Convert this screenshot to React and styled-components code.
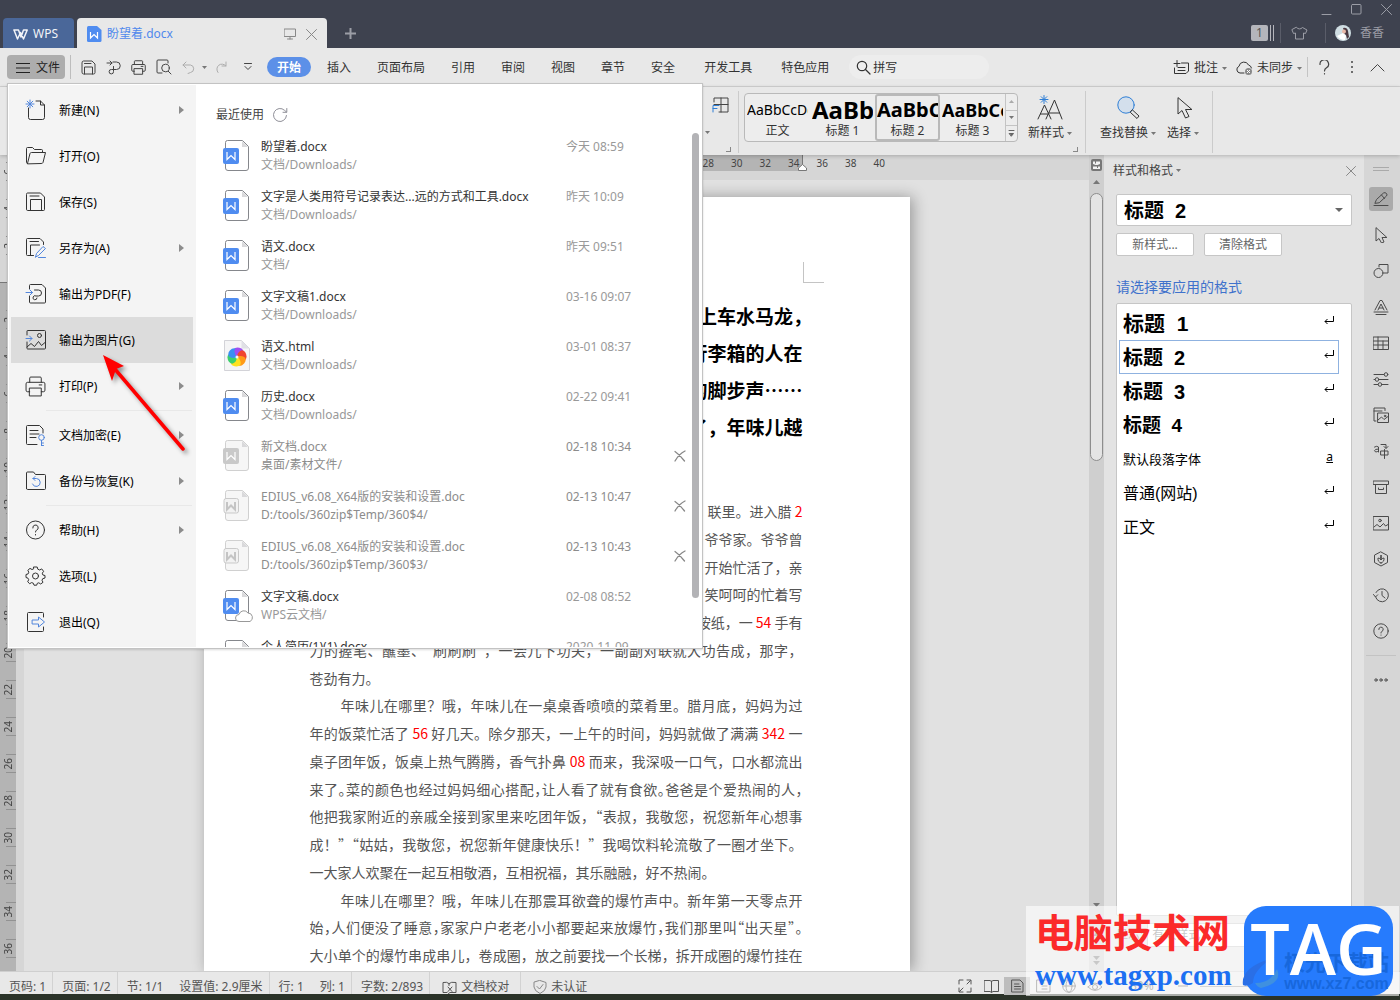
import React from "react";
import styled, { createGlobalStyle, css } from "styled-components";

const UI = `"Noto Sans", "Noto Sans CJK SC", sans-serif`;
const DOC = `"Noto Sans CJK SC", "Noto Sans", sans-serif`;

const Global = createGlobalStyle`
  *, *::before, *::after { box-sizing: border-box; }
  html, body { margin: 0; }
  body { font: 12px/18px ${UI}; color: #333; background: #2b3329; }
  button, input, select { font: inherit; color: inherit; margin: 0; }
  button { border: 0; background: none; padding: 0; }
  svg { display: block; flex: none; }
`;

/* ---------- shell ---------- */

const Desktop = styled.div`
  position: relative;
  height: 100vh;
  padding-bottom: 6px;
  background: #2b3329;
  overflow: hidden;
`;

const Window = styled.div`
  height: 100%;
  display: flex;
  flex-direction: column;
  background: #e8e8e8;
`;

const TitleBar = styled.header`
  display: flex;
  justify-content: space-between;
  height: 48px;
  flex: none;
  background: #3e424f;
  color: #9b9da6;
`;

const TabStrip = styled.div`
  display: flex;
  align-items: flex-end;
  padding-left: 3px;
`;

const HomeTab = styled.button`
  display: flex;
  align-items: center;
  gap: 5px;
  width: 71px;
  height: 30px;
  padding: 2px 0 0 10px;
  margin-right: 3px;
  border-radius: 4px 4px 0 0;
  background: #4a6799;
  color: #f2f4f8;
`;

const DocTab = styled.div`
  display: flex;
  align-items: center;
  width: 250px;
  height: 30px;
  padding: 2px 10px 0;
  border-radius: 4px 4px 0 0;
  background: #e8e8e8;
  color: #5089ec;
`;

const TabName = styled.span`
  flex: 1;
  padding-left: 5px;
`;

const TabTools = styled.span`
  display: flex;
  align-items: center;
  gap: 10px;
  color: #888;
`;

const NewTab = styled.button`
  display: grid;
  place-items: center;
  width: 46px;
  height: 30px;
`;

const TitleRight = styled.div`
  display: flex;
  flex-direction: column;
  align-items: flex-end;
`;

const WindowButtons = styled.div`
  display: flex;
  gap: 19px;
  height: 18px;
  align-items: center;
  padding-right: 8px;
`;

const Account = styled.div`
  display: flex;
  align-items: center;
  height: 30px;
  padding-right: 16px;
  span:last-child { padding-left: 9px; }
`;

const Rule = styled.span`
  width: 1px;
  height: ${(p) => p.$h || 20}px;
  margin: 0 ${(p) => p.$gap || 0}px;
  background: ${(p) => p.$c || "#c4c4c4"};
  flex: none;
`;

const Count = styled.span`
  display: flex;
  gap: 2px;
  height: 16px;
  i { width: 1px; background: #b4b5bb; }
  b {
    width: 17px;
    border-radius: 2px;
    background: #b4b5bb;
    color: #555;
    font-weight: 400;
    line-height: 16px;
    text-align: center;
  }
`;

/* ---------- menu bar ---------- */

const MenuBar = styled.nav`
  display: flex;
  align-items: center;
  flex: none;
  height: 39px;
  padding: 0 8px 0 7px;
  border-bottom: 1px solid #d3d3d3;
  color: #333;
`;

const FileButton = styled.button`
  display: flex;
  align-items: center;
  gap: 6px;
  width: 58px;
  height: 24px;
  padding: 1px 0 0 9px;
  border-radius: 4px;
  background: #adadad;
  color: #222;
`;

const ToolButton = styled.button`
  display: grid;
  place-items: center;
  width: ${(p) => p.$w || 25}px;
  height: 24px;
  color: ${(p) => (p.$dim ? "#adadad" : "#444")};
`;

const MenuTab = styled.button`
  padding: 0 13px;
  margin-left: ${(p) => (p.$apart ? 3 : 0)}px;
  height: 20px;
  line-height: 22px;
  white-space: nowrap;
  ${(p) =>
    p.$on &&
    css`
      padding: 0 10px;
      margin: 0 3px 0 6px;
      border-radius: 10px;
      background: #5c90e8;
      color: #fff;
      font-weight: 700;
    `}
`;

const Search = styled.label`
  display: flex;
  align-items: center;
  gap: 2px;
  width: 140px;
  height: 24px;
  margin-left: 7px;
  padding-left: 7px;
  border-radius: 12px;
  background: #ededed;
  input {
    width: 100px;
    height: 20px;
    padding: 1px 0 0;
    border: 0;
    outline: 0;
    background: none;
  }
  input::placeholder { color: #333; opacity: 1; }
`;

const MenuRight = styled.div`
  display: flex;
  align-items: center;
  margin-left: auto;
`;

const Action = styled.button`
  display: flex;
  align-items: center;
  gap: 4px;
  margin-right: ${(p) => p.$r}px;
  padding-top: 2px;
  white-space: nowrap;
`;

/* ---------- ribbon ---------- */

const Ribbon = styled.section`
  position: relative;
  display: flex;
  flex: none;
  height: 68px;
  padding-left: 703px;
  box-shadow: 0 1px 4px rgba(0, 0, 0, 0.22);
  z-index: 1;
`;

const Group = styled.div`
  position: relative;
  display: flex;
  align-items: flex-start;
  margin: 4px 0 2px;
  padding: 2px ${(p) => p.$r || 0}px 0 ${(p) => p.$l || 0}px;
  border-right: 1px solid #cbcbcb;
`;

const Launcher = styled.i`
  position: absolute;
  right: 7px;
  bottom: 1px;
  width: 5px;
  height: 5px;
  border: solid #888;
  border-width: 0 1px 1px 0;
`;

const TableTool = styled.div`
  display: flex;
  align-items: flex-start;
  width: 35px;
  padding-left: 2px;
  color: #444;
  > :first-child { margin-top: 38px; }
`;

const Gallery = styled.div`
  display: flex;
  height: 49px;
  border: 1px solid #b9b9b9;
  border-radius: 4px;
  background: #ededed;
`;

const StyleCard = styled.button`
  display: flex;
  flex-direction: column;
  width: 65px;
  overflow: hidden;
  border: 2px solid ${(p) => (p.$on ? "#b9b9b9" : "transparent")};
  border-radius: 3px;
`;

const Sample = styled.span`
  flex: none;
  width: 100%;
  height: 26px;
  overflow: hidden;
  color: #000;
  line-height: 28px;
  text-align: left;
  white-space: nowrap;
  font-size: ${(p) => p.$size}px;
  font-weight: ${(p) => (p.$bold ? 700 : 400)};
`;

const SampleName = styled.span`
  flex: none;
  width: 100%;
  line-height: 17px;
  text-align: center;
`;

const GalleryScroll = styled.div`
  display: grid;
  grid-template-rows: repeat(3, 1fr);
  width: 12px;
  border-left: 1px solid #c4c4c4;
  button { display: grid; place-items: center; color: #666; }
  button + button { border-top: 1px solid #c4c4c4; }
`;

const BigTool = styled.button`
  display: flex;
  flex-direction: column;
  align-items: center;
  padding-top: 1px;
  white-space: nowrap;
  svg { height: 28px; }
  span { display: flex; align-items: center; gap: 3px; padding: 1px 0 0 4px; line-height: 20px; }
  span svg { height: 3px; }
`;

/* ---------- workspace ---------- */

const Work = styled.main`
  display: flex;
  flex: 1;
  min-height: 0;
`;

const SideRuler = styled.div`
  display: flex;
  flex-direction: column;
  width: 24px;
  flex: none;
  overflow: hidden;
  background: #d6d6d6;
`;

const RulerPart = styled.div`
  display: flex;
  flex-direction: column;
  flex: ${(p) => (p.$margin ? "none" : "1")};
  width: ${(p) => (p.$margin ? 24 : 16)}px;
  min-height: 0;
  ${(p) =>
    p.$margin
      ? css`
          height: 127px;
          justify-content: flex-end;
          overflow: hidden;
          padding-bottom: 18px;
        `
      : css`
          padding-top: 18px;
          border-top: 1px solid #777;
          background: #b4b4b4;
          overflow: hidden;
        `}
`;

const RulerMark = styled.div`
  display: flex;
  flex: none;
  align-items: center;
  height: 37px;
  width: 16px;
  padding-left: 6px;
  span {
    display: flex;
    align-items: center;
    justify-content: flex-end;
    width: 10px;
    height: 19px;
    border: solid #929292;
    border-width: 1px 0;
  }
  b {
    font-size: 10px;
    font-weight: 400;
    line-height: 12px;
    writing-mode: vertical-rl;
    rotate: 180deg;
    margin-right: 2px;
    color: #444;
  }
`;

const DocArea = styled.div`
  display: flex;
  flex-direction: column;
  flex: 1;
  min-width: 0;
`;

const TopRuler = styled.div`
  height: 25px;
  flex: none;
  display: flex;
  justify-content: center;
  background: #d6d6d6;
`;

const TopRulerInner = styled.div`
  position: relative;
  display: flex;
  width: 706px;
  height: 16px;
  padding: 0 16px 0 120px;
  background: linear-gradient(to right, transparent 106px, #b4b4b4 106px, #b4b4b4 598px, transparent 598px);
  color: #444;
  font-size: 10px;
  line-height: 16px;
  span { flex: 1; text-align: center; }
`;

const IndentMark = styled.svg`
  position: absolute;
  left: 594px;
  top: 0;
`;

const Canvas = styled.div`
  display: flex;
  justify-content: center;
  flex: 1;
  min-height: 0;
  padding-top: 17px;
  overflow: hidden;
  background: #e1e1e1;
`;

const Paper = styled.article`
  width: 706px;
  flex: none;
  align-self: stretch;
  padding: 65px 107px 0 106px;
  background: #fff;
  box-shadow: 3px 0 14px rgba(0, 0, 0, 0.32);
  font-family: ${DOC};
  overflow: clip;
`;

const Corner = styled.div`
  width: 21px;
  height: 21px;
  margin: 0 -21px 14px auto;
  border: solid #c4c4c4;
  border-width: 0 0 1px 1px;
`;

const Lead = styled.p`
  margin: 0 0 52px;
  color: #000;
  font-size: 19px;
  font-weight: 700;
  line-height: 37px;
  text-align: right;
  span { display: block; white-space: nowrap; }
  span:first-child { font-feature-settings: "halt"; }
`;

const Body = styled.div`
  display: grid;
  grid-auto-rows: 1fr;
  height: 472px;
  color: #555;
  font-size: 14px;
  line-height: 28px;
  em { color: #f00; font-style: normal; }
`;

const Line = styled.p`
  margin: 0;
  min-height: 0;
  white-space: nowrap;
  text-align: ${(p) => (p.$tail ? "right" : "left")};
  text-align-last: ${(p) => (p.$tail ? "right" : p.$end ? "left" : "justify")};
  text-indent: ${(p) => (p.$indent ? 31 : 0)}px;
  font-feature-settings: ${(p) => (p.$tight ? '"halt"' : "normal")};
`;

const Scroll = styled.div`
  display: flex;
  flex-direction: column;
  align-items: center;
  width: 15px;
  flex: none;
  padding: 4px 0 6px;
  background: #cfcfcf;
  color: #777;
`;

const Thumb = styled.div`
  width: 13px;
  height: 268px;
  margin: 8px 0 auto;
  border: 1px solid #8d8d8d;
  border-radius: 7px;
  background: #e4e4e4;
`;

const ScrollEnd = styled.div`
  display: grid;
  justify-items: center;
  gap: 20px;
`;

/* ---------- style pane ---------- */

const Pane = styled.aside`
  display: flex;
  flex-direction: column;
  width: 260px;
  flex: none;
  padding: 0 12px 24px;
  background: #e3e3e3;
`;

const PaneHead = styled.div`
  display: flex;
  align-items: center;
  justify-content: space-between;
  height: 31px;
  margin: 0 -4px 8px -3px;
  color: #444;
  span { display: flex; align-items: center; gap: 3px; }
  button { color: #888; }
`;

const Picker = styled.label`
  display: flex;
  align-items: center;
  height: 32px;
  padding-right: 8px;
  border: 1px solid #c6c6c6;
  border-radius: 2px;
  background: #fff;
  select {
    flex: 1;
    appearance: none;
    border: 0;
    padding: 2px 0 0 7px;
    background: none;
    color: #000;
    font: 700 20px/28px "Liberation Sans", "Noto Sans CJK SC", sans-serif;
  }
`;

const PaneButtons = styled.div`
  display: flex;
  gap: 10px;
  margin: 7px 0 20px;
  button {
    width: 78px;
    height: 23px;
    border: 1px solid #c6c6c6;
    border-radius: 2px;
    background: #fff;
    color: #666;
  }
`;

const Prompt = styled.div`
  height: 22px;
  margin-bottom: 5px;
  color: #3f72cc;
  font-size: 14px;
  line-height: 22px;
`;

const StyleList = styled.div`
  flex: 1;
  min-height: 0;
  padding: 2px 12px 0 2px;
  border: 1px solid #c6c6c6;
  border-radius: 2px;
  background: #fff;
`;

const StyleRow = styled.button`
  display: flex;
  align-items: flex-start;
  justify-content: space-between;
  width: 100%;
  height: 34px;
  padding: 0 4px 0 3px;
  border: 1px solid ${(p) => (p.$on ? "#8fb2e0" : "transparent")};
  color: #000;
  font-family: "Liberation Sans", "Noto Sans CJK SC", sans-serif;
  font-size: ${(p) => p.$size}px;
  font-weight: ${(p) => (p.$bold ? 700 : 400)};
  line-height: 34px;
  white-space: pre;
  svg { margin-top: 9px; }
  u { font: 12px/28px ${UI}; padding-right: 1px; }
`;

const ShowRow = styled.label`
  display: flex;
  align-items: center;
  gap: 4px;
  height: 24px;
  margin-top: 7px;
  color: #777;
  select {
    flex: 1;
    height: 24px;
    appearance: none;
    padding: 0 4px;
    border: 1px solid #c6c6c6;
    background: #fff;
  }
`;

const Dock = styled.aside`
  display: flex;
  flex-direction: column;
  align-items: center;
  gap: 12px;
  width: 36px;
  flex: none;
  padding: 12px 2px 0 0;
  background: #d6d6d6;
  color: #4a4a4a;
`;

const DockButton = styled.button`
  display: grid;
  place-items: center;
  width: 24px;
  height: 24px;
  border-radius: 3px;
  background: ${(p) => (p.$on ? "#aaaaaa" : "transparent")};
`;

const Grip = styled.i`
  width: 16px;
  height: 4px;
  margin-bottom: 4px;
  border: solid #aaa;
  border-width: 1px 0;
`;

const DockRule = styled.i`
  width: 30px;
  height: 1px;
  background: #c3c3c3;
`;

/* ---------- status bar ---------- */

const Status = styled.footer`
  display: flex;
  align-items: center;
  justify-content: space-between;
  flex: none;
  height: 23px;
  border-top: 1px solid #cfcfcf;
  color: #555;
  white-space: nowrap;
`;

const StatusItem = styled.span`
  display: inline-flex;
  align-items: center;
  gap: 4px;
  height: 22px;
  padding: 8px ${(p) => (p.$wide ? 11 : 6)}px 0 ${(p) => (p.$wide ? 12 : 9)}px;
  border-right: 1px solid ${(p) => (p.$sep ? "#d2d2d2" : "transparent")};
`;

const StatusLeft = styled.div`
  display: flex;
`;

const ViewTools = styled.div`
  display: flex;
  align-items: center;
  padding: 6px 7px 0 0;
  input { width: 137px; margin: 0 4px; height: 14px; appearance: none; background: none; }
  input::-webkit-slider-runnable-track { height: 1px; background: #999; }
  input::-webkit-slider-thumb {
    appearance: none;
    width: 12px;
    height: 12px;
    margin-top: -6px;
    border: 1px solid #666;
    border-radius: 50%;
    background: #e8e8e8;
  }
`;

const Percent = styled.output`
  width: 62px;
  padding-left: 22px;
`;

const ViewButton = styled.button`
  display: grid;
  place-items: center;
  width: 26px;
  height: 18px;
  color: #555;
  background: ${(p) => (p.$on ? "#bdbdbd" : "transparent")};
`;

/* ---------- file menu ---------- */

const FileMenu = styled.section`
  position: absolute;
  left: 7px;
  top: 83px;
  z-index: 3;
  display: grid;
  grid-template-columns: 188px 506px;
  border: 1px solid #c3c3c3;
  background: #fff;
  box-shadow: 0 1px 2px rgba(0, 0, 0, 0.15);
`;

const Commands = styled.div`
  margin: 1px 0 1px 1px;
  padding: 2px 3px 2px 2px;
  background: #f4f4f4;
`;

const Command = styled.button`
  display: flex;
  align-items: center;
  width: 100%;
  height: 46px;
  padding: 0 9px 0 14px;
  background: ${(p) => (p.$on ? "#dcdcdc" : "transparent")};
  color: #333;
  text-align: left;
  span { flex: 1; padding: 2px 0 0 13px; color: #000; }
`;

const CommandRule = styled.i`
  display: block;
  height: 1px;
  margin: 1px 1px 1px 35px;
  background: #e8e8e8;
`;

const Recent = styled.div`
  display: flex;
  flex-direction: column;
  padding: 0 3px 1px 20px;
`;

const RecentHead = styled.div`
  display: flex;
  align-items: center;
  gap: 8px;
  height: 46px;
  padding-top: 15px;
  color: #444;
`;

const RecentBody = styled.div`
  display: flex;
  flex: 1;
  contain: size;
  overflow: hidden;
`;

const RecentList = styled.ul`
  flex: 1;
  margin: 0;
  padding: 0;
  list-style: none;
`;

const RecentItem = styled.li`
  display: grid;
  grid-template-columns: 38px 305px 108px 18px;
  align-items: center;
  height: 50px;
  padding: 2px 0 0 7px;
  color: ${(p) => (p.$gone ? "#8c8c8c" : "#333")};
  small { display: block; font-size: 12px; color: ${(p) => (p.$gone ? "#8c8c8c" : "#999")}; }
  time { color: ${(p) => (p.$gone ? "#8c8c8c" : "#999")}; align-self: start; padding-top: 6px; }
`;

const RecentThumb = styled.div`
  width: 7px;
  height: 465px;
  margin: 3px 0 0;
  border-radius: 4px;
  background: #b3b3b6;
`;

const Pointer = styled.svg`
  position: absolute;
  left: 90px;
  top: 345px;
  z-index: 4;
  pointer-events: none;
  g { filter: drop-shadow(3px 3px 2px rgba(0, 0, 0, 0.4)); }
`;

/* ---------- watermark ---------- */

const Watermark = styled.div`
  position: absolute;
  right: 1px;
  bottom: 4px;
  z-index: 5;
  display: flex;
  width: 373px;
  height: 90px;
  padding: 0 6px 0 9px;
  background: rgba(255, 255, 255, 0.6);
`;

const MarkText = styled.div`
  flex: 1;
  color: #fb2a2a;
  font: 700 39px/48px "Noto Sans CJK SC", sans-serif;
  white-space: nowrap;
  a {
    display: block;
    color: #1c6ff2;
    font: 700 29px/42px "Liberation Serif", serif;
    text-decoration: none;
  }
`;

const MarkLogo = styled.div`
  position: relative;
  isolation: isolate;
  width: 149px;
  border-radius: 22px;
  background: #267bfd;
  color: #fff;
  font: 600 70px/84px "Open Sans", sans-serif;
  text-align: center;
`;

const Ghost = styled.div`
  position: absolute;
  right: 4px;
  top: 42px;
  z-index: -1;
  display: flex;
  align-items: center;
  gap: 3px;
  color: #1767dc;
  font: 700 21px/26px "Noto Sans CJK SC", sans-serif;
  white-space: nowrap;
  small { display: block; font: 700 16px/20px "Liberation Sans", sans-serif; }
`;

/* ---------- icons ---------- */

const blue = "#5286dc";

const Ico = ({ w = 16, h, vb, sw = 1, children, ...rest }) => (
  <svg width={w} height={h || w} viewBox={vb || `0 0 ${w} ${h || w}`} fill="none" stroke="currentColor" strokeWidth={sw} strokeLinecap="round" strokeLinejoin="round" aria-hidden="true" {...rest}>
    {children}
  </svg>
);

const Caret = ({ up }) => (
  <svg width="5" height="3" viewBox="0 0 5 3" aria-hidden="true">
    <path d={up ? "M0 3h5L2.5 0z" : "M0 0h5L2.5 3z"} fill={up ? "#aaa" : "#777"} />
  </svg>
);

const Cross = ({ s = 10 }) => (
  <Ico w={s}>
    <path d={`M.5 .5L${s - 0.5} ${s - 0.5}M${s - 0.5} .5L.5 ${s - 0.5}`} />
  </Ico>
);

const SaveIcon = () => (
  <Ico w={15}><path d="M1 2.500Q1 1 2.500 1H11L14 4V12.500Q14 14 12.500 14H2.500Q1 14 1 12.500ZM3.500 14V7H11.500V14M3.500 3.500H10" /></Ico>
);
const PdfOutIcon = () => (
  <Ico w={15}><path d="M1 3H6M4 1L6 3L4 5M7 2H10.500A3.500 3.500 0 0 1 10.500 9.500H5.500A2.200 2.200 0 1 0 7.500 11.500V6.500" /></Ico>
);
const PrintIcon = ({ w = 15 }) => (
  <Ico w={w} vb="0 0 20 20" sw={20 / w}><path d="M4.500 6V2Q4.500 1 5.500 1H14.500Q15.500 1 15.500 2V6M4.500 15H2.500Q1 15 1 13.500V7.500Q1 6 2.500 6H17.500Q19 6 19 7.500V13.500Q19 15 17.500 15H15.500M4.500 11.500H15.500V19H4.500ZM13.500 8.500H16" /></Ico>
);
const PreviewIcon = () => (
  <Ico w={16}><path d="M6 14H2Q1 14 1 13V2Q1 1 2 1H11Q12 1 12 2V4M12.200 12.200L15 15" /><circle cx="9.500" cy="9" r="3.800" /></Ico>
);
const LensIcon = () => (
  <Ico w={15} sw={1.2}><circle cx="6" cy="6" r="4.700" /><path d="M9.500 9.500L14 14" /></Ico>
);
const WordBadge = ({ color = "#4f8cf0" }) => (
  <svg width="15" height="16" viewBox="0 0 15 16" aria-hidden="true">
    <path d="M1.500 0H10L14.500 4V14.500Q14.500 16 13 16H1.500Q0 16 0 14.500V1.500Q0 0 1.500 0Z" fill={color} />
    <path d="M3.500 6V12L7 8.500L10.500 12V6" fill="none" stroke="#fff" strokeWidth="1.200" />
  </svg>
);

const FileGlyph = ({ kind }) => {
  if (kind === "html")
    return (
      <svg width="28" height="32" viewBox="0 0 28 32" aria-hidden="true">
        <path d="M1.500 .5H18.500L26.500 8.500V30.500H1.500Z" fill="#f5f5f6" stroke="#d3d3d8" />
        <path d="M18.500 .5V8.500H26.500Z" fill="#e0e0e6" />
        {["#a04df0", "#f0452f", "#ff9a18", "#ffe11e", "#3ccf6d", "#3b8df2"].map((c, i) => (
          <path key={c} d="M14 17Q9.500 14 10.500 9.500Q13 6 18.500 8.500Q20.500 10 20.500 11.500Q16 11 14 17Z" fill={c} transform={`rotate(${i * 60} 14 17)`} />
        ))}
        <circle cx="14" cy="17" r="1.500" fill="#f5f5f6" />
      </svg>
    );
  const dim = kind === "gone" || kind === "old";
  const edge = dim ? "#d0d0d0" : "#85878c";
  return (
    <svg width="32" height="34" viewBox="0 0 32 34" aria-hidden="true">
      <path d="M4.500 1.500H19.500L25.500 7.500V29Q25.500 31.500 23 31.500H5Q2.500 31.500 2.500 29V3.500Q2.500 1.500 4.500 1.500Z" fill={dim ? "#f6f6f6" : "#fff"} stroke={edge} />
      <path d="M19 2V8H25Z" fill="#d9d9db" />
      {kind === "old" ? (
        <rect x="1" y="9.500" width="14.500" height="14.500" rx="2" fill="#f2f2f2" stroke="#c9c9c9" />
      ) : (
        <rect y="9" width="16" height="16" rx="2" fill={dim ? "#c9c9c9" : "#4f8cf0"} />
      )}
      <path d="M4 13V20.500L8 16.500L12 20.500V13" fill="none" stroke={kind === "old" ? "#c4c4c4" : "#fff"} strokeWidth={kind === "old" ? 2 : 1.2} />
      {kind === "cloud" && (
        <path d="M16 32.500A3.500 3.500 0 0 1 16 25.500A5 5 0 0 1 25 24A4.500 4.500 0 0 1 27 32.500Z" fill="#fff" stroke="#999" />
      )}
    </svg>
  );
};

const cmdArt = {
  new: <><path d="M3.500 9V18.500Q3.500 20.500 5.500 20.500H17.500Q19.500 20.500 19.500 18.500V6L15.500 2H11M15.500 2V6H19.500" /><path d="M5 1V9M1 5H9M2.200 2.200L7.800 7.800M7.800 2.200L2.200 7.800" stroke={blue} /></>,
  open: <path d="M2.500 18.500Q1.500 18.500 1.500 17.500V3.500Q1.500 2.500 2.500 2.500H7.500L9.500 4.500H16.500Q17.500 4.500 17.500 5.500V7.500M2.500 18.500L5 8.500Q5.300 7.500 6.500 7.500H20.500L18 17.500Q17.700 18.500 16.500 18.500Z" />,
  save: <path d="M1.500 3Q1.500 2 2.500 2H15.500L19.500 6V18.500Q19.500 19.500 18.500 19.500H2.500Q1.500 19.500 1.500 18.500ZM5.500 19.500V8.500H16.500V19.500M5 5H14" />,
  saveas: <><path d="M8.500 18.500H2.500Q1.500 18.500 1.500 17.500V2.500Q1.500 1.500 2.500 1.500H15L18.500 5V7.500M5.500 18.500V8H14.500M5 4.500H13.500" /><path d="M10.500 20L11.500 16.500L18 9.500L20.500 11.500L13.500 18.500L10.500 20M13.500 20.500H20.500" stroke={blue} /></>,
  pdf: <><path d="M4.500 6V2.500Q4.500 1.500 5.500 1.500H17L20.500 5V19Q20.500 20 19.500 20H5.500Q4.500 20 4.500 19V13M9.500 7H13.500A3 3 0 0 1 13.500 13H11A2 2 0 1 0 12 15" /><path d="M1 9.500H7.500M5 7L7.500 9.500L5 12" stroke={blue} /></>,
  pic: <><path d="M2 6V2Q2 1.500 2.500 1.500H19.500Q20.500 1.500 20.500 2.500V19Q20.500 20 19.500 20H2.500Q2 20 2 19V13M2 18L6 14.500L9.500 17.500L13.500 12.500L16.500 16.500L20 13.500" /><circle cx="14.500" cy="6.500" r="2" /><path d="M1 9.500H7M4.500 7L7 9.500L4.500 12" stroke={blue} /></>,
  lock: <><path d="M12 20.500H2.500Q1.500 20.500 1.500 19.500V2.500Q1.500 1.500 2.500 1.500H14.500L18 5V9M5 6.500H13M5 10H14M5 13.500H11" /><circle cx="16.500" cy="13.500" r="2.800" stroke={blue} /><path d="M16.500 16.500V21.500M16.500 19H18.500M16.500 21.500H18.500" stroke={blue} /></>,
  backup: <><path d="M1.500 18.500V3Q1.500 2 2.500 2H8.500L10.500 4.500H19.500Q20.500 4.500 20.500 5.500V18.500Q20.500 19.500 19.500 19.500H2.500Q1.500 19.500 1.500 18.500Z" /><path d="M8 8.500H11.500A4 4 0 1 1 7.500 14M10 6.500L8 8.500L10 10.500" stroke={blue} /></>,
  help: <><circle cx="10.500" cy="11" r="9" /><path d="M7.800 9A2.700 2.700 0 1 1 11.500 11.200Q10.500 11.700 10.500 13M10.500 15.500V16" /></>,
  gear: <><path d="M8.800 2H12.200L12.800 4.200L14.700 5L16.700 3.900L18.600 6.300L17.300 8.200L17.900 10L20 10.500V13L17.700 13.700L17 15.300L18 17.300L15.700 19L13.800 17.800L12.300 18.300L11.700 20.200H9L8.300 18.200L6.600 17.600L4.700 18.700L2.700 16.800L3.700 14.700L3 13.200L1 12.500V9.500L3.100 8.900L3.800 7.200L2.800 5.300L5 3.400L7 4.500L8.300 4Z" /><circle cx="10.500" cy="11" r="3" /></>,
  exit: <><path d="M18.500 6V2.500Q18.500 1.500 17.500 1.500H3.500Q2.500 1.500 2.500 2.500V19.500Q2.500 20.500 3.500 20.500H17.500Q18.500 20.500 18.500 19.500V16" /><path d="M7.500 9H13.500V6L19.500 11L13.500 16V13H7.500Z" stroke={blue} /></>,
};

const dockArt = [
  <path key="a" d="M1 14.500H15M2 12L3.500 8.500L10.500 2Q12 1 13.500 2.500Q14.500 4 13.500 5L6.500 11.500ZM8.500 4L11.500 7.500" />,
  <path key="b" d="M3 1V14L6 11.500L8.500 16L11 15L9 10.500H13.500Z" />,
  <g key="c"><circle cx="5.500" cy="10" r="4.500" /><path d="M6 4V1.500H15V10H11" /></g>,
  <path key="d" d="M2 11L7 1.500H9L14 11M5 11L8 5L11 11M6 9H10M1 13H15M3 15.500H13" />,
  <path key="e" d="M.5 2H15.500V14.500H.5ZM.5 6H15.500M.5 10H15.500M5 2V14.500M10 6V14.500" />,
  <g key="f"><path d="M1 3.500H11M1 8.500H2M6 8.500H15M1 13.500H5M9 13.500H15" /><circle cx="13" cy="3.500" r="1.800" /><circle cx="4" cy="8.500" r="1.800" /><circle cx="7" cy="13.500" r="1.800" /></g>,
  <g key="g"><path d="M3 14H1V1H12V3.500M1 4H9M5 6H15.500V15.500H5ZM5 13L8.500 10L11 12.500L15 9.500" /><circle cx="12" cy="9" r=".8" /></g>,
  <path key="h" d="M1.500 4Q4 2.500 5.500 4V9M5.500 6Q1.500 6 1.500 7.800Q2.500 10 5.500 8M8 1.500H13V5M11 3.500L13 5.500L15 3.500M8 8H15V12H8ZM11.500 6.500V15.500" />,
  <path key="i" d="M.5 2H15.500V5.500H.5ZM2.500 5.500V14.500H13.500V5.500M5.500 9V10.500H10.500V9" />,
  <g key="j"><path d="M.5 1.500H15.500V15H.5ZM1 12L4 9.500L7 12L10.500 8.500L12.500 11L15 9.500" /><circle cx="7" cy="5.500" r="1.300" /></g>,
  <path key="k" d="M8 1L14.500 4.500V11.500L8 15L1.500 11.500V4.500ZM8 12Q4.500 11 5 7Q7 7 8 9Q9 4 8 4Q7 5 8 9Q9 7 11 7Q11.500 11 8 12Z" />,
  <path key="l" d="M3 5.500A6.500 6.500 0 1 1 2.600 10M.5 7.500L2.500 10L4.700 7.800M9 4.500V8.500L12 11" />,
  <g key="m"><circle cx="8" cy="8" r="7.200" /><path d="M5.800 6.500A2.200 2.200 0 1 1 8.800 8.400Q8 8.800 8 10M8 12V12.200" /></g>,
];

/* ---------- data ---------- */

const commands = [
  ["new", "新建(N)", true], ["open", "打开(O)"], ["save", "保存(S)"], ["saveas", "另存为(A)", true],
  ["pdf", "输出为PDF(F)"], ["pic", "输出为图片(G)"], ["print", "打印(P)", true], null,
  ["lock", "文档加密(E)", true], ["backup", "备份与恢复(K)", true], null,
  ["help", "帮助(H)", true], ["gear", "选项(L)"], ["exit", "退出(Q)"],
];

const recents = [
  ["docx", "盼望着.docx", "文档/Downloads/", "今天 08:59"],
  ["docx", "文字是人类用符号记录表达...远的方式和工具.docx", "文档/Downloads/", "昨天 10:09"],
  ["docx", "语文.docx", "文档/", "昨天 09:51"],
  ["docx", "文字文稿1.docx", "文档/Downloads/", "03-16 09:07"],
  ["html", "语文.html", "文档/Downloads/", "03-01 08:37"],
  ["docx", "历史.docx", "文档/Downloads/", "02-22 09:41"],
  ["gone", "新文档.docx", "桌面/素材文件/", "02-18 10:34"],
  ["old", "EDIUS_v6.08_X64版的安装和设置.doc", "D:/tools/360zip$Temp/360$4/", "02-13 10:47"],
  ["old", "EDIUS_v6.08_X64版的安装和设置.doc", "D:/tools/360zip$Temp/360$3/", "02-13 10:43"],
  ["cloud", "文字文稿.docx", "WPS云文档/", "02-08 08:52"],
  ["docx", "个人简历(1)(1).docx", "", "2020-11-09"],
];

const menuTabs = ["开始", "插入", "页面布局", "引用", "审阅", "视图", "章节", "安全", "开发工具", "特色应用"];

const styleRows = [
  ["标题  1", 21, true], ["标题  2", 20, true], ["标题  3", 20, true], ["标题  4", 19, true],
  ["默认段落字体", 13, false], ["普通(网站)", 16, false], ["正文", 16, false],
];

const body = [
  ["联里。进入腊 *2", "tail"], ["爷爷家。爷爷曾", "tail"], ["开始忙活了，亲", "tail"], ["笑呵呵的忙着写", "tail"], ["按纸，一 *54 手有", "tail"],
  ["力的握笔、蘸墨、“刷刷刷”，一会儿下功夫，一副副对联就大功告成，那字，"],
  ["苍劲有力。", "end"],
  ["年味儿在哪里？哦，年味儿在一桌桌香喷喷的菜肴里。腊月底，妈妈为过", "indent"],
  ["年的饭菜忙活了 *56 好几天。除夕那天，一上午的时间，妈妈就做了满满 *342 一"],
  ["桌子团年饭，饭桌上热气腾腾，香气扑鼻 *08 而来，我深吸一口气，口水都流出"],
  ["来了。菜的颜色也经过妈妈细心搭配，让人看了就有食欲。爸爸是个爱热闹的人，", "tight"],
  ["他把我家附近的亲戚全接到家里来吃团年饭，“表叔，我敬您，祝您新年心想事"],
  ["成！”“姑姑，我敬您，祝您新年健康快乐！”我喝饮料轮流敬了一圈才坐下。"],
  ["一大家人欢聚在一起互相敬酒，互相祝福，其乐融融，好不热闹。", "end"],
  ["年味儿在哪里？哦，年味儿在那震耳欲聋的爆竹声中。新年第一天零点开", "indent"],
  ["始，人们便没了睡意，家家户户老老小小都要起来放爆竹，我们那里叫“出天星”。", "tight"],
  ["大小单个的爆竹串成串儿，卷成圈，放之前要找一个长梯，拆开成圈的爆竹挂在"],
];

const marked = (text) => text.split(/(\*\d+)/).map((t, i) => (t[0] === "*" ? <em key={i}>{t.slice(1)}</em> : t));

const range = (from, to) => Array.from({ length: (to - from) / 2 + 1 }, (_, i) => from + i * 2);

const Mark = ({ n }) => <RulerMark><span><b>{n}</b></span></RulerMark>;

/* ---------- sections ---------- */

const Title = () => (
  <TitleBar>
    <TabStrip>
      <HomeTab>
        <Ico w={15} h={11} sw={1.5}><path d="M.8 1H5.500L8 8L10.500 1H14.200L10.500 10L7.500 3.500L4.500 10L1 1" /></Ico>
        WPS
      </HomeTab>
      <DocTab>
        <WordBadge />
        <TabName>盼望着.docx</TabName>
        <TabTools>
          <Ico w={12}><path d="M.5 1H11.500V8.500H.5ZM6 8.500V11M3.500 11H8.500" /></Ico>
          <Cross s={11} />
        </TabTools>
      </DocTab>
      <NewTab aria-label="新建标签"><Ico w={13} sw={2}><path d="M6.500 1V12M1 6.500H12" strokeLinecap="butt" /></Ico></NewTab>
    </TabStrip>
    <TitleRight>
      <WindowButtons>
        <button aria-label="最小化"><Ico w={11}><path d="M1 10.500H10" /></Ico></button>
        <button aria-label="最大化"><Ico w={11}><rect x=".5" y=".5" width="9.500" height="9.500" rx="1" /></Ico></button>
        <button aria-label="关闭"><Cross s={11} /></button>
      </WindowButtons>
      <Account>
        <Count><b>1</b><i /><i /></Count>
        <Rule $gap={6} $c="#5a5d69" />
        <Ico w={29} h={14}><path d="M9.500 1.500Q12.500 4.500 15.500 1.500L20 4L18.500 7.500L16.500 7V13H8.500V7L6.500 7.500L5 4Z" /></Ico>
        <Rule $gap={9} $c="#5a5d69" />
        <svg width="16" height="16" viewBox="0 0 16 16" aria-hidden="true">
          <circle cx="8" cy="8" r="8" fill="#cfdde2" />
          <path d="M8 3Q12 2 13 6L14 12L12 14L11 10Q9 9 9 6Z" fill="#4b3a42" />
          <path d="M2 11L8 8L11 11L10 15Q5 15 2 11Z" fill="#fff" />
          <circle cx="9" cy="6.500" r="2" fill="#e9b9a8" />
        </svg>
        <span>香香</span>
      </Account>
    </TitleRight>
  </TitleBar>
);

const Menu = () => (
  <MenuBar>
    <FileButton><Ico w={14} h={10}><path d="M0 .5H14M0 5H14M0 9.500H14" /></Ico>文件</FileButton>
    <Rule $gap={5} $h={24} $c="#bdbdbd" />
    <ToolButton aria-label="保存"><SaveIcon /></ToolButton>
    <ToolButton aria-label="输出为PDF"><PdfOutIcon /></ToolButton>
    <ToolButton aria-label="打印"><PrintIcon /></ToolButton>
    <ToolButton aria-label="打印预览"><PreviewIcon /></ToolButton>
    <ToolButton aria-label="撤销" $dim><Ico w={13}><path d="M1 4H8.500A3.800 3.800 0 0 1 8.500 11.500L6 12.500M4 1L1 4L4 7" /></Ico></ToolButton>
    <ToolButton $w={6} aria-label="撤销列表"><Caret up={false} /></ToolButton>
    <ToolButton $w={27} aria-label="恢复" $dim><Ico w={13}><path d="M12 1V5H8M12 5A5 5 0 1 0 4 11.500" /></Ico></ToolButton>
    <ToolButton $w={27} aria-label="更多"><Ico w={8} h={8}><path d="M.5 .5H7.500M1 3.500L4 6.500L7 3.500" /></Ico></ToolButton>
    {menuTabs.map((t, i) => <MenuTab key={t} $on={i === 0} $apart={i > 7}>{t}</MenuTab>)}
    <Search><LensIcon /><input aria-label="搜索" placeholder="拼写" /></Search>
    <MenuRight>
      <Action $r={9}><Ico w={17} h={16}><path d="M4 .5V6.500M1 3.500H7M8.500 3H15.500V11L13 13.500H1.500V8M5 7.500H12M5 10.500H12" /></Ico>批注<Caret /></Action>
      <Action $r={5}>
        <Ico w={17} h={15}><path d="M8 12H4A3.500 3.500 0 0 1 3 5.300A5 5 0 0 1 12.500 4A4 4 0 0 1 15.500 7" /><circle cx="12.500" cy="10.500" r="3.500" fill="#888" stroke="none" /><path d="M11.300 9.300L13.700 11.700M13.700 9.300L11.300 11.700" stroke="#fff" /></Ico>
        未同步<Caret />
      </Action>
      <Rule />
      <ToolButton $w={33} aria-label="帮助"><Ico w={11} h={15} sw={1.2}><path d="M1 4.500A4.300 4.300 0 1 1 7.500 7.800Q5.500 9 5.500 11M5.500 13.500V14" /></Ico></ToolButton>
      <ToolButton $w={21} aria-label="更多"><Ico w={4} h={14} sw={2}><path d="M2 2V2.100M2 7V7.100M2 12V12.100" /></Ico></ToolButton>
      <ToolButton $w={30} aria-label="收起功能区"><Ico w={15} h={9}><path d="M1 8L7.500 1.500L14 8" /></Ico></ToolButton>
    </MenuRight>
  </MenuBar>
);

const samples = [["AaBbCcDd", "正文", 14, false], ["AaBbC", "标题 1", 24, true], ["AaBbC", "标题 2", 20, true], ["AaBbCc", "标题 3", 18, true]];

const RibbonBar = () => (
  <Ribbon>
    <Group>
      <TableTool>
        <Caret />
        <Ico w={22} h={20} vb="2 -1 22 20"><path d="M6 8V4H20V18H11M6 10.500H20M13 4V18" /><path d="M5 18V11.500H11M5 14.500H9" stroke="#2f7fd6" /></Ico>
      </TableTool>
      <Launcher />
    </Group>
    <Group $l={5} $r={7}>
      <Gallery>
        {samples.map(([s, n, size, bold], i) => (
          <StyleCard key={n} $on={i === 2}><Sample $size={size} $bold={bold}>{s}</Sample><SampleName>{n}</SampleName></StyleCard>
        ))}
        <GalleryScroll>
          <button aria-label="上一行"><Caret up /></button>
          <button aria-label="下一行"><Caret /></button>
          <button aria-label="展开"><Ico w={7} h={7}><path d="M1 .5H6M1.500 3.500H5.500L3.500 6Z" fill="currentColor" /></Ico></button>
        </GalleryScroll>
      </Gallery>
      <BigTool>
        <Ico w={60} h={28} vb="0 0 60 28"><path d="M20 25L26.500 11L33 25M22.500 20H30.500M28 25L36.500 6L44 25M31 19H41.500" /><path d="M26 1.500V9.500M22 5.500H30M23.200 2.700L28.800 8.300M28.800 2.700L23.200 8.300" stroke="#2f7fd6" /></Ico>
        <span>新样式<Caret /></span>
      </BigTool>
      <Launcher />
    </Group>
    <Group $l={10} $r={6}>
      <BigTool>
        <Ico w={28} h={28} vb="-4 0 28 28"><circle cx="10" cy="11" r="8.200" fill="#d3dfec" stroke="#2f7fd6" /><path d="M16.500 16L23 22L21 24.500L14.500 18.500Z" /></Ico>
        <span>查找替换<Caret /></span>
      </BigTool>
      <BigTool>
        <Ico w={50} h={28} vb="-3 0 50 28"><path d="M19 4V20L23 16.500L26.500 24L30 22.500L26.500 15.500H32.500Z" /></Ico>
        <span>选择<Caret /></span>
      </BigTool>
    </Group>
  </Ribbon>
);

const Document = () => (
  <DocArea>
    <TopRuler>
      <TopRulerInner>
        {range(2, 40).map((n) => <span key={n}>{n}</span>)}
        <IndentMark width="9" height="16" viewBox="0 0 9 16" aria-hidden="true"><path d="M4.500 0V10" stroke="#777" /><path d="M.5 15.500V13L4.500 9.500L8.500 13V15.500Z" fill="#fff" stroke="#777" /></IndentMark>
      </TopRulerInner>
    </TopRuler>
    <Canvas>
      <Paper lang="zh-CN">
        <Corner />
        <Lead>
          <span>上车水马龙，</span><span>行李箱的人在</span><span>的脚步声……</span><span>了，年味儿越</span>
        </Lead>
        <Body>
          {body.map(([t, k], i) => (
            <Line key={i} $tail={k === "tail"} $end={k === "end"} $indent={k === "indent"} $tight={k === "tight"}>{marked(t)}</Line>
          ))}
        </Body>
      </Paper>
    </Canvas>
  </DocArea>
);

const StylePane = () => (
  <Pane>
    <PaneHead><span>样式和格式<Caret /></span><button aria-label="关闭窗格"><Cross /></button></PaneHead>
    <Picker>
      <select aria-label="当前样式" defaultValue="h2"><option value="h2">标题&nbsp;&nbsp;2</option></select>
      <svg width="8" height="4" viewBox="0 0 8 4" aria-hidden="true"><path d="M0 0H8L4 4Z" fill="#666" /></svg>
    </Picker>
    <PaneButtons><button>新样式...</button><button>清除格式</button></PaneButtons>
    <Prompt>请选择要应用的格式</Prompt>
    <StyleList>
      {styleRows.map(([t, size, bold], i) => (
        <StyleRow key={t} $size={size} $bold={bold} $on={i === 1}>
          <span>{t}</span>
          {i === 4 ? <u>a</u> : <Ico w={10} h={9} strokeLinecap="butt"><path d="M9.500 0V5.500H1M3.500 3L1 5.500L3.500 8" /></Ico>}
        </StyleRow>
      ))}
    </StyleList>
    <ShowRow>显示:<select defaultValue="v"><option value="v">有效样式</option></select></ShowRow>
  </Pane>
);

const StatusBar = () => (
  <Status>
    <StatusLeft>
      <StatusItem $sep>页码: 1</StatusItem>
      <StatusItem $sep>页面: 1/2</StatusItem>
      <StatusItem>节: 1/1</StatusItem>
      <StatusItem $sep>设置值: 2.9厘米</StatusItem>
      <StatusItem>行: 1</StatusItem>
      <StatusItem $sep>列: 1</StatusItem>
      <StatusItem $sep>字数: 2/893</StatusItem>
      <StatusItem $sep $wide><Ico w={15} h={13}><path d="M5 11.500H1V1.500Q5 .5 7 2.500M7 2.500Q9 .5 14 1.500V11.500H8L6.500 12.500M7 2.500V4.500M6 6L10 10.500M10 6L6 10.500" /></Ico>文档校对</StatusItem>
      <StatusItem $wide><Ico w={14} h={14}><path d="M7 .5L13 2.500V7Q12.500 11 7 13.500Q1.500 11 1 7V2.500ZM4 6.500L6.500 9L10 4.500" stroke="#888" /></Ico>未认证</StatusItem>
    </StatusLeft>
    <ViewTools>
      <ViewButton aria-label="全屏"><Ico w={14}><path d="M1 5V1H5M9 1H13V5M13 9V13H9M5 13H1V9M9 5L12.500 1.500M5 9L1.500 12.500" /></Ico></ViewButton>
      <ViewButton aria-label="阅读版式"><Ico w={15} h={14}><path d="M7.500 2V13M.5 1.500H6L7.500 2.500L9 1.500H14.500V12.500H9L7.500 13.500L6 12.500H.5Z" /></Ico></ViewButton>
      <ViewButton aria-label="页面视图" $on><Ico w={13} h={14}><path d="M1 1H9L12 4V13H1ZM3.500 5H8M3.500 7.500H9.500M3.500 10H9.500" /></Ico></ViewButton>
      <ViewButton aria-label="大纲"><Ico w={15} h={14}><path d="M1 1H14V13H1ZM4 4H8M6 7H11M6 10H11" /></Ico></ViewButton>
      <ViewButton aria-label="Web版式"><Ico w={14}><circle cx="7" cy="7" r="6.300" /><ellipse cx="7" cy="7" rx="3" ry="6.300" /><path d="M1 7H13" /></Ico></ViewButton>
      <ViewButton aria-label="护眼模式"><Ico w={16} h={14}><path d="M1 8Q8 0 15 8Q8 15 1 8" /><circle cx="8" cy="8" r="2.500" /></Ico></ViewButton>
      <Percent>89%</Percent>
      <ViewButton aria-label="缩小"><Ico w={10}><path d="M0 5H10" /></Ico></ViewButton>
      <input type="range" aria-label="显示比例" min="0" max="100" defaultValue="40" />
      <ViewButton aria-label="放大"><Ico w={10}><path d="M0 5H10M5 0V10" /></Ico></ViewButton>
      <ViewButton aria-label="最佳缩放"><Ico w={12}><path d="M1 4V1H4M8 1H11V4M11 8V11H8M4 11H1V8M5.500 6H6.500" /></Ico></ViewButton>
    </ViewTools>
  </Status>
);

const FilePanel = () => (
  <FileMenu>
    <Commands>
      {commands.map((c, i) =>
        c === null ? <CommandRule key={i} /> : (
          <Command key={c[0]} $on={c[0] === "pic"}>
            {c[0] === "print" ? <PrintIcon w={21} /> : <Ico w={21} h={22} vb="0 0 21 22">{cmdArt[c[0]]}</Ico>}
            <span>{c[1]}</span>
            {c[2] && <svg width="5" height="8" viewBox="0 0 5 8" aria-hidden="true"><path d="M0 0L5 4L0 8Z" fill="#8c8c8c" /></svg>}
          </Command>
        )
      )}
    </Commands>
    <Recent>
      <RecentHead>最近使用<Ico w={16} stroke="#8f8f98"><path d="M14.500 8.500A6.500 6.500 0 1 1 12.500 3.300L14.500 5M14.800 1.500V5.300H11" /></Ico></RecentHead>
      <RecentBody>
        <RecentList>
          {recents.map(([k, name, path, time], i) => {
            const gone = k === "gone" || k === "old";
            return (
              <RecentItem key={i} $gone={gone}>
                <FileGlyph kind={k} />
                <div>{name}<small>{path || "\u00a0"}</small></div>
                <time>{time}</time>
                {gone && <button aria-label="移除"><Ico w={12} stroke="#888" sw={1.3}><path d="M1 1.500Q6 5 10.500 11M11 1Q5 4 1 11" /></Ico></button>}
              </RecentItem>
            );
          })}
        </RecentList>
        <RecentThumb />
      </RecentBody>
    </Recent>
  </FileMenu>
);

export default function App() {
  return (
    <Desktop>
      <Global />
      <Window>
        <Title />
        <Menu />
        <RibbonBar />
        <Work>
          <SideRuler>
            <RulerPart $margin>{[6, 4, 2].map((n) => <Mark key={n} n={n} />)}</RulerPart>
            <RulerPart>{range(2, 36).map((n) => <Mark key={n} n={n} />)}</RulerPart>
          </SideRuler>
          <Document />
          <Scroll>
            <svg width="11" height="12" viewBox="0 0 11 12" aria-hidden="true"><rect width="11" height="12" rx="2" fill="#777" /><path d="M2 2.500H9V5L6.500 6H4.500L2 5ZM2 7.500H9V10H2Z" fill="#f2f2f2" /><path d="M4.500 2V4.500M6.500 7V9" stroke="#777" /></svg>
            <svg width="7" height="14" viewBox="0 0 7 14" aria-hidden="true"><path d="M0 13H7L3.500 9Z" fill="#777" /></svg>
            <Thumb />
            <ScrollEnd>
              <svg width="7" height="4" viewBox="0 0 7 4" aria-hidden="true"><path d="M0 0H7L3.500 4Z" fill="#777" /></svg>
              <svg width="7" height="9" viewBox="0 0 7 9" aria-hidden="true"><path d="M0 4H7L3.500 0ZM0 9H7L3.500 5Z" fill="#777" /></svg>
              <svg width="7" height="9" viewBox="0 0 7 9" aria-hidden="true"><path d="M0 0H7L3.500 4ZM0 5H7L3.500 9Z" fill="#777" /></svg>
            </ScrollEnd>
          </Scroll>
          <StylePane />
          <Dock>
            <Grip />
            {dockArt.map((art, i) => <DockButton key={i} $on={i === 0} aria-label={`工具 ${i + 1}`}><Ico w={16}>{art}</Ico></DockButton>)}
            <DockRule />
            <DockButton aria-label="更多"><Ico w={14} h={4}><circle cx="2" cy="2" r="1.200" /><circle cx="7" cy="2" r="1.200" /><circle cx="12" cy="2" r="1.200" /></Ico></DockButton>
          </Dock>
        </Work>
        <StatusBar />
      </Window>
      <FilePanel />
      <Pointer width="106" height="116" viewBox="0 0 106 116" aria-hidden="true">
        <g>
          <path d="M93 104L24 23" stroke="#f00" strokeWidth="3.500" strokeLinecap="round" />
          <path d="M13 10L34 21L26 24L22 36Z" fill="#f00" />
        </g>
      </Pointer>
      <Watermark>
        <MarkText>电脑技术网<a href="#tagxp">www.tagxp.com</a></MarkText>
        <MarkLogo>
          TAG
          <Ghost>
            <svg width="40" height="36" viewBox="0 0 40 36" aria-hidden="true">
              <path d="M2 32Q-1 14 34 4Q12 16 12 30Q6 34 2 32Z" fill="#2a6fe6" />
              <path d="M14 30Q30 30 36 16Q42 30 20 35Q16 34 14 30Z" fill="#3f90e0" />
            </svg>
            <span>极光下载站<small>www.xz7.com</small></span>
          </Ghost>
        </MarkLogo>
      </Watermark>
    </Desktop>
  );
}
